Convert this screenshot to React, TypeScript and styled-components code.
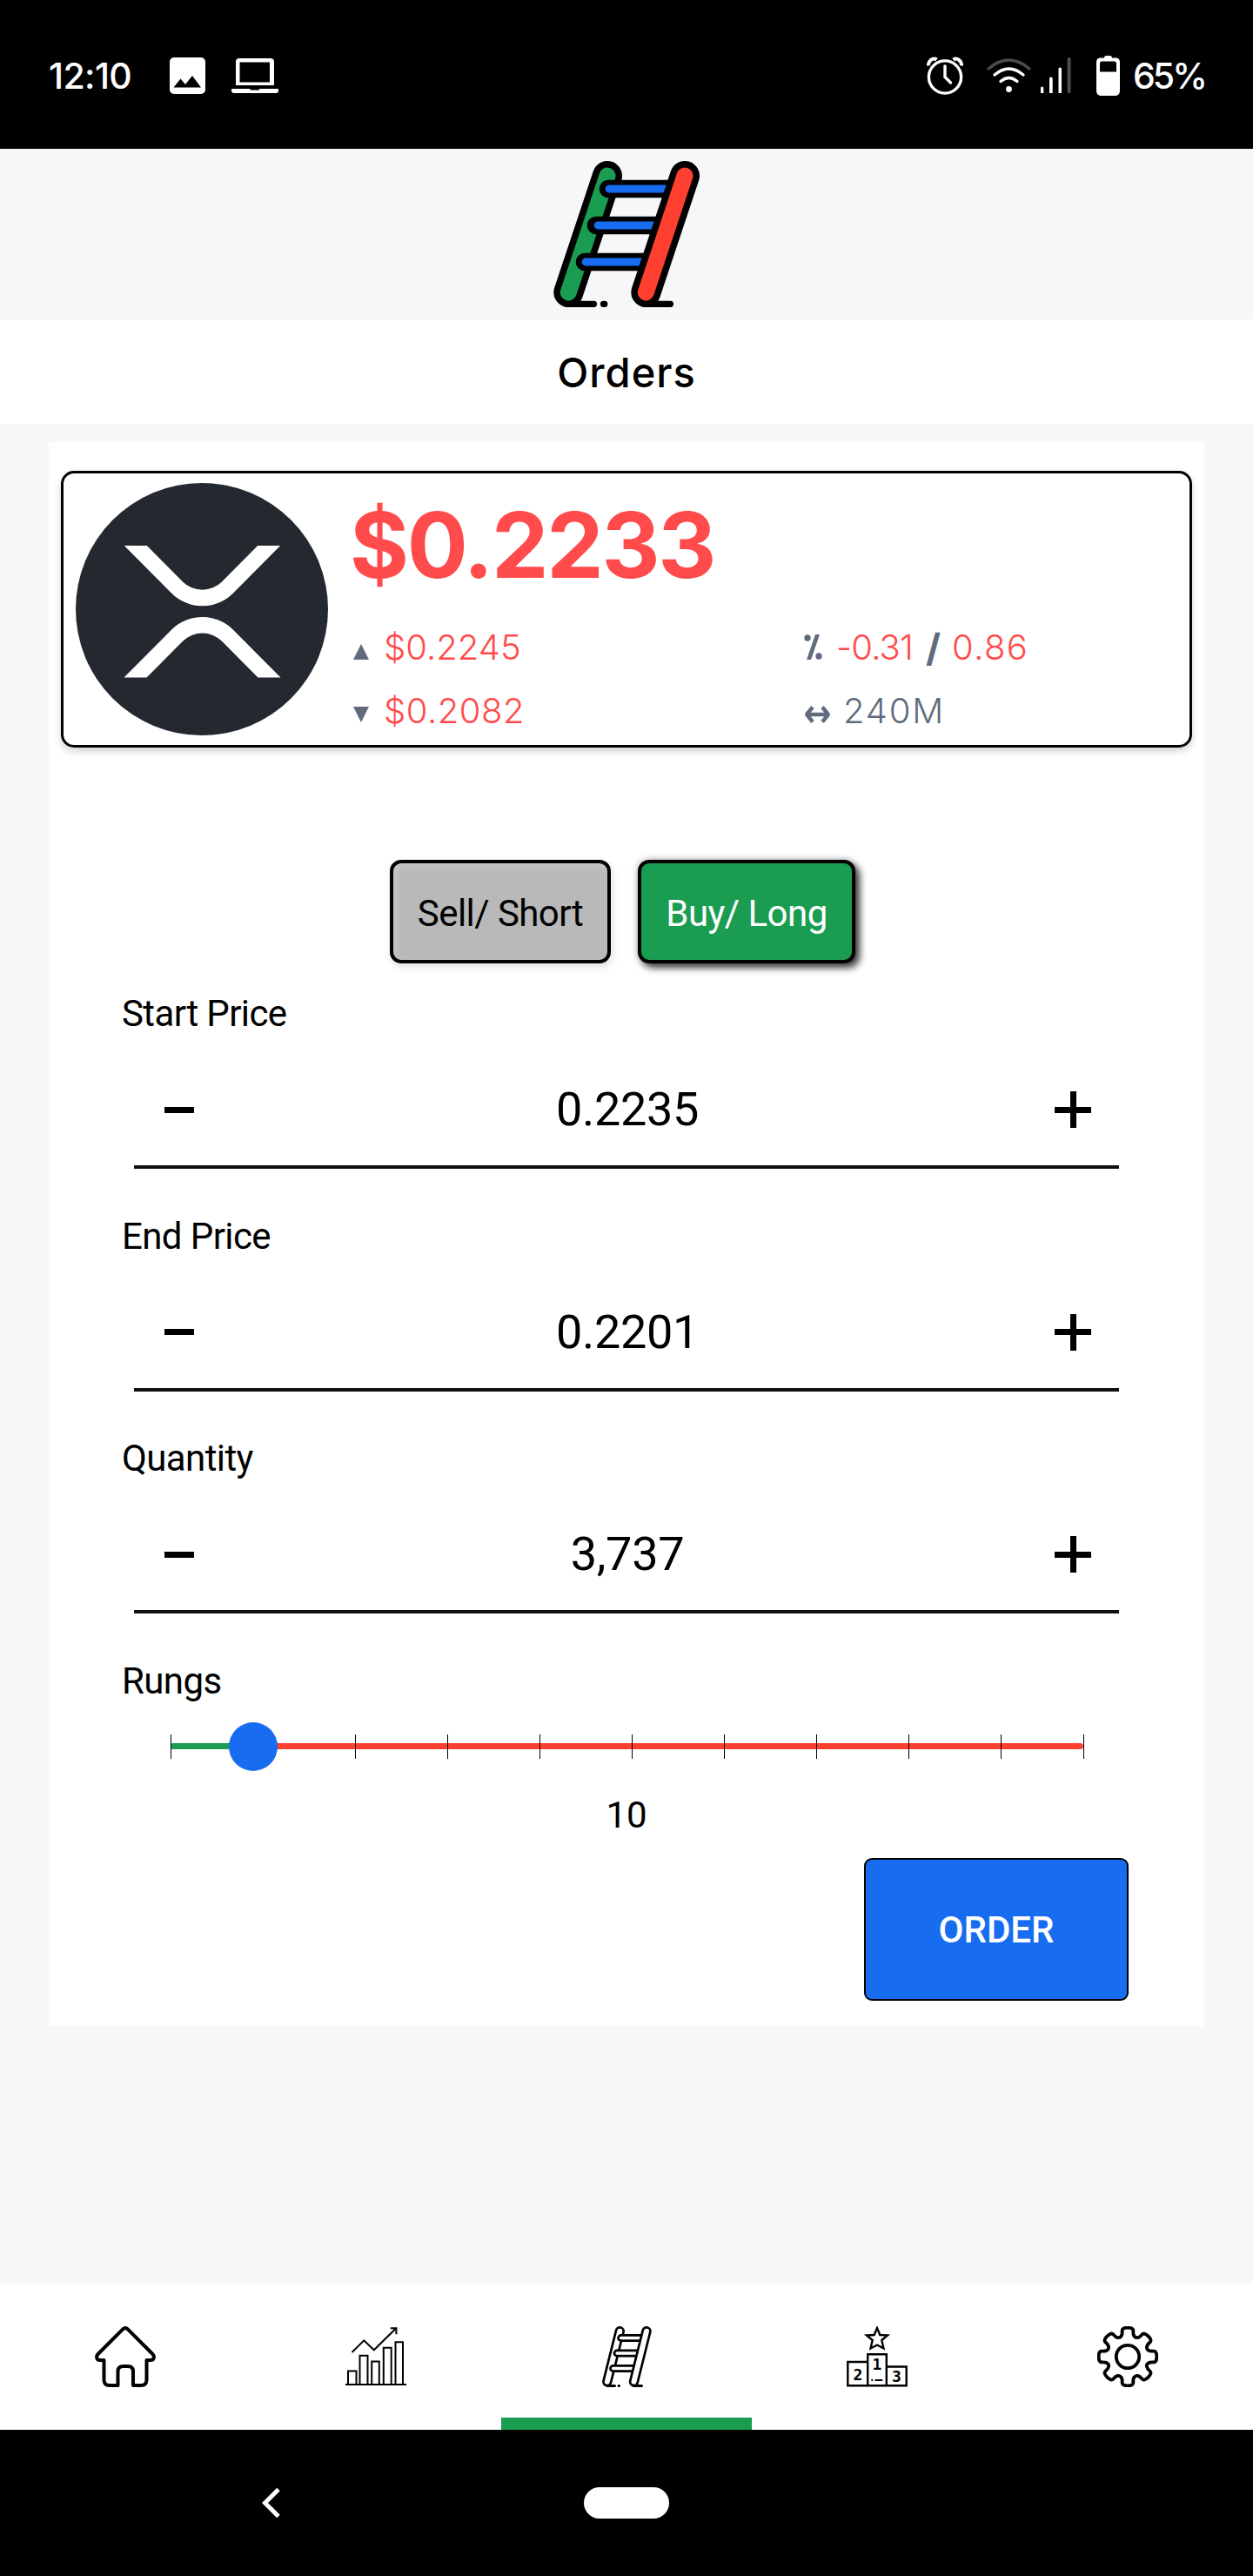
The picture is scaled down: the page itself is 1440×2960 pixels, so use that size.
import React from "react";
import styled, { createGlobalStyle, css } from "styled-components";

const color = {
  green: "#1a9c51",
  red: "#ff3f30",
  price: "#ff4b4b",
  blue: "#176cf0",
  slate: "#606b7d",
  page: "#f5f7f9",
};

const GlobalStyle = createGlobalStyle`
  * { box-sizing: border-box; }
  body { margin: 0; background: ${color.page}; }
`;

const Screen = styled.div`
  width: 1440px;
  height: 2960px;
  display: flex;
  flex-direction: column;
  background: ${color.page};
  color: #000;
  font-family: Roboto, "Liberation Sans", sans-serif;
  font-size: 42px;
  line-height: 50px;
  overflow: hidden;
`;

/* ---------- system status bar ---------- */

const StatusBar = styled.header`
  flex: none;
  height: 171px;
  padding: 2px 56px 0 56px;
  display: flex;
  align-items: center;
  justify-content: space-between;
  background: #000;
  color: #fff;
  font-family: Inter, "Liberation Sans", sans-serif;
  font-weight: 500;
`;

const StatusGroup = styled.div`
  display: flex;
  align-items: center;
`;

const StatusText = styled.span<{ $width: number; $spacing: number }>`
  width: ${(p) => p.$width}px;
  font-size: 41px;
  white-space: nowrap;
  letter-spacing: ${(p) => p.$spacing}px;
`;

const Glyph = styled.svg<{ $gap?: number }>`
  display: block;
  flex: none;
  margin-left: ${(p) => p.$gap ?? 0}px;
`;

/* ---------- app header ---------- */

const LogoBar = styled.div`
  flex: none;
  height: 196px;
  display: flex;
  justify-content: center;
  align-items: center;
  padding-bottom: 8px;
  padding-top: 8px;
`;

const TitleBar = styled.h1`
  flex: none;
  height: 120px;
  margin: 0;
  display: flex;
  align-items: center;
  justify-content: center;
  background: #fff;
  font: 500 47px/120px Inter, "Liberation Sans", sans-serif;
  letter-spacing: 1px;
  padding-top: 2px;
`;

/* ---------- order card ---------- */

const Body = styled.main`
  flex: 1;
  padding: 21px 56px 0;
`;

const Card = styled.section`
  height: 1820px;
  padding: 33px 14px 0;
  background: #fff;
`;

const Ticker = styled.div`
  height: 318px;
  padding: 11px 14px;
  display: flex;
  gap: 29px;
  border: 3px solid #000;
  border-radius: 15px;
  box-shadow: 0 4px 9px rgba(0, 0, 0, 0.18);
`;

const TickerInfo = styled.div`
  flex: 1;
  font-family: Inter, "Liberation Sans", sans-serif;
`;

const Price = styled.div`
  height: 152px;
  margin-left: -4px;
  font-size: 104px;
  font-weight: 700;
  line-height: 142px;
  letter-spacing: -2.3px;
  color: ${color.price};
`;

const Stats = styled.div`
  display: grid;
  grid-template-columns: 518px 1fr;
  grid-auto-rows: 73px;
`;

const Stat = styled.div`
  display: flex;
  align-items: center;
  font-size: 40px;
  font-weight: 300;
  color: ${color.slate};
`;

const Figure = styled.span<{ $down?: boolean; $gap?: number; $spacing?: number }>`
  margin-left: ${(p) => p.$gap ?? 0}px;
  color: ${(p) => (p.$down ? color.price : color.slate)};
  letter-spacing: ${(p) => p.$spacing ?? 0}px;
`;

const Slash = styled.b`
  margin: 0 13px 0 15px;
  font-size: 44px;
  font-weight: 700;
`;

const Sides = styled.div`
  margin: 129px 0 32px;
  padding-left: 378px;
  display: flex;
  gap: 31px;
`;

const SideButton = styled.button<{ $active?: boolean }>`
  width: ${(p) => (p.$active ? 250 : 254)}px;
  height: 119px;
  padding: 4px 0 0;
  border: 4px solid #000;
  border-radius: 13px;
  font: inherit;
  letter-spacing: -0.55px;
  ${(p) =>
    p.$active
      ? css`
          background: ${color.green};
          color: #fff;
          box-shadow: 5px 5px 8px rgba(0, 0, 0, 0.75), 0 0 8px rgba(0, 0, 0, 0.3);
        `
      : css`
          background: #b9b9b9;
          color: #000;
          box-shadow: 2px 4px 10px rgba(0, 0, 0, 0.12), inset 3px 3px 10px rgba(255, 255, 255, 0.2);
        `}
`;

const Form = styled.div`
  padding: 0 70px;
`;

const Field = styled.div`
  height: 255.6px;
`;

const Label = styled.div`
  height: 50px;
  line-height: 52px;
  letter-spacing: -0.6px;
`;

const Stepper = styled.div`
  height: 154px;
  margin: 0 14px;
  padding: 22px 32px 0 35px;
  display: flex;
  align-items: center;
  justify-content: space-between;
  border-bottom: 4px solid #101010;
`;

const StepValue = styled.span`
  font-size: 54px;
  line-height: 64px;
  letter-spacing: -0.3px;
  margin-left: 7px;
`;

const StepGlyph = styled.button<{ $plus?: boolean }>`
  width: ${(p) => (p.$plus ? 42 : 34)}px;
  height: 42px;
  padding: 0;
  border: 0;
  background: ${(p) =>
    p.$plus
      ? "linear-gradient(#000, #000) center / 42px 7px no-repeat, linear-gradient(#000, #000) center / 7px 42px no-repeat"
      : "linear-gradient(#000, #000) center / 34px 7px no-repeat"};
`;

const Slider = styled.div`
  position: relative;
  height: 56px;
  margin: 23px 55px 0 56px;
  display: flex;
  align-items: center;
`;

const Track = styled.div`
  flex: 1;
  height: 7px;
  border-radius: 4px;
  background: ${color.red};
  overflow: hidden;
`;

const TrackFill = styled.div`
  height: 7px;
  background: ${color.green};
`;

const Tick = styled.i`
  position: absolute;
  top: 14px;
  width: 1px;
  height: 28px;
  background: #000;
`;

const Thumb = styled.div`
  position: absolute;
  top: 0;
  width: 56px;
  height: 56px;
  margin-left: -28px;
  border-radius: 50%;
  background: ${color.blue};
`;

const RungCount = styled.div`
  height: 50px;
  margin: 25px 0;
  line-height: 52px;
  text-align: center;
`;

const OrderRow = styled.div`
  display: flex;
  justify-content: flex-end;
  margin-right: 3px;
`;

const OrderButton = styled.button`
  width: 304px;
  height: 164px;
  border: 2px solid #000;
  border-radius: 9px;
  background: ${color.blue};
  color: #fff;
  font: inherit;
  font-weight: 500;
  padding: 3px 0 0;
`;

/* ---------- bottom bars ---------- */

const TabBar = styled.nav`
  flex: none;
  height: 168px;
  display: grid;
  grid-template-columns: repeat(5, 1fr);
  background: #fff;
`;

const Tab = styled.a<{ $active?: boolean }>`
  display: flex;
  align-items: center;
  justify-content: center;
  box-shadow: ${(p) => (p.$active ? `inset 0 -14px ${color.green}` : "none")};
`;

const SystemNav = styled.footer`
  flex: none;
  height: 168px;
  padding-left: 301px;
  display: flex;
  align-items: center;
  background: #000;
`;

const HomePill = styled.div`
  width: 98px;
  height: 36px;
  margin-left: 349px;
  border-radius: 18px;
  background: #fff;
`;

/* ---------- drawings ---------- */

const Logo = () => (
  <svg width="168" height="168" viewBox="0 0 168 168" fill="none" strokeLinecap="round">
    <path d="M17 164.3H46.5M57.4 164.3H58.8M106 164.3H134.5" stroke="#000" strokeWidth="7.2" />
    <path d="M62 17L17.3 151" stroke="#000" strokeWidth="34" />
    <path d="M62 17L17.3 151" stroke={color.green} strokeWidth="19" />
    <path d="M63 32H140M49 74H125M36 116H110" stroke="#000" strokeWidth="20.6" />
    <path d="M64 32H140M51 74H125M37 116H110" stroke={color.blue} strokeWidth="8.8" />
    <path d="M151 17L106.3 151" stroke="#000" strokeWidth="34" />
    <path d="M151 17L106.3 151" stroke={color.red} strokeWidth="19" />
  </svg>
);

const XrpCoin = () => (
  <Glyph width="290" height="290" viewBox="0 0 290 290">
    <circle cx="145" cy="145" r="145" fill="#23292f" />
    <g fill="#fff" transform="translate(55.5 72) scale(.3516 .3575)">
      <path d="M437 0h74L357 152.48c-55.77 55.19-146.19 55.19-202 0L.94 0H75l117 115.83a91.11 91.11 0 0 0 127.91 0z" />
      <path d="M74.05 424H0l155-153.42c55.77-55.19 146.19-55.19 202 0L512 424h-74L320 307.23a91.11 91.11 0 0 0-127.91 0z" />
    </g>
  </Glyph>
);

const Triangle = ({ down }: { down?: boolean }) => (
  <svg width="18" height="18" viewBox="0 0 18 18" fill={color.slate} transform={down ? "translate(0 4)" : "translate(0 5)"}>
    <path d={down ? "M0 0H18L9 18z" : "M0 18H18L9 0z"} />
  </svg>
);

const HomeIcon = () => (
  <svg width="70" height="70" viewBox="0 0 70 70" fill="none" stroke="#000" strokeWidth="4" strokeLinejoin="round">
    <path d="M35 2c-1.2 0-2 .5-2.8 1.3L3.6 32C.9 34.800 2.100 39 6 39H10.500V61.500Q10.500 68 17 68H26.500V52Q26.500 46 32.500 46H38Q44 46 44 52V68H53Q59.500 68 59.500 61.500V39H64C67.900 39 69.100 34.800 66.400 32L37.800 3.300C37 2.500 36.200 2 35 2z" />
  </svg>
);

const ChartIcon = () => (
  <svg width="70" height="70" viewBox="0 0 70 70" fill="none" stroke="#000" strokeWidth="2">
    <path d="M0 67H70" />
    <path d="M3 67V51.500H12.500V67M16.500 67V33.700H25.500V67M30.200 67V40.500H38.800V67M43.800 67V24.700H52.700V67M57.500 67V18.300H66V67" />
    <path d="M7.500 30L21.300 16.300L32.800 27.300L58 2.500M51.800 2.300H58.400V9.300" />
  </svg>
);

const LadderIcon = () => (
  <svg width="57" height="70" viewBox="0 0 57 70" fill="none" strokeLinecap="round">
    <path d="M6 68.500H14.500M19 68.500H19.500M36 68.500H45.500" stroke="#000" strokeWidth="3" />
    <path d="M20.300 5.700L5.800 63.700" stroke="#000" strokeWidth="11.400" />
    <path d="M20.300 5.700L5.800 63.700" stroke="#fff" strokeWidth="6" />
    <path d="M21.500 13.500H47M17 31H43M12.500 48.500H38" stroke="#000" strokeWidth="8.800" />
    <path d="M21.500 13.500H47M17 31H43M12.500 48.500H38" stroke="#fff" strokeWidth="3.400" />
    <path d="M51 5.700L36.500 63.700" stroke="#000" strokeWidth="11.400" />
    <path d="M51 5.700L36.500 63.700" stroke="#fff" strokeWidth="6" />
  </svg>
);

const PodiumIcon = () => (
  <svg width="70" height="70" viewBox="0 0 70 70" fill="none" stroke="#000" strokeWidth="2.400">
    <path d="M35 2l3.300 8 8.700.5-6.700 5.500 2.200 9.500L35 21.500l-7.500 4 2.200-9.500L23 10.500l8.700-.5z" />
    <path d="M24.200 68.300H1.300V41H24.200M24.200 68.300V32.300H45.800V68.300zM45.800 46.500H68.700V68.300H45.800" />
    <path d="M28.300 62H30.200M32.600 62H41.300" strokeWidth="2.200" />
    <g
      fill="#000"
      stroke="none"
      fontFamily="DejaVu Sans Mono, monospace"
      fontWeight="700"
      fontSize="18"
      textAnchor="middle"
    >
      <text x="13" y="61.500">2</text>
      <text x="34.800" y="50">1</text>
      <text x="57.300" y="64">3</text>
    </g>
  </svg>
);

const gearOutline = (() => {
  const pts: [number, number][] = [];
  for (let i = 0; i < 8; i++) {
    const profile = [
      [-22.5, 23.2],
      [-13, 26.5],
      [-11.5, 34],
      [11.5, 34],
      [13, 26.5],
    ];
    for (const [a, r] of profile) {
      const t = ((a + i * 45 - 90) * Math.PI) / 180;
      pts.push([35 + r * Math.cos(t), 35 + r * Math.sin(t)]);
    }
  }
  const mid = (a: [number, number], b: [number, number]) =>
    `${((a[0] + b[0]) / 2).toFixed(2)} ${((a[1] + b[1]) / 2).toFixed(2)}`;
  let d = `M${mid(pts[pts.length - 1], pts[0])}`;
  pts.forEach((p, i) => {
    d += `Q${p[0].toFixed(2)} ${p[1].toFixed(2)} ${mid(p, pts[(i + 1) % pts.length])}`;
  });
  return d + "z";
})();

const GearIcon = () => (
  <svg width="70" height="70" viewBox="0 0 70 70" fill="none" stroke="#000" strokeWidth="3.800">
    <path d={gearOutline} />
    <circle cx="35" cy="35" r="13.200" />
  </svg>
);

/* ---------- screen ---------- */

const fields = [
  { label: "Start Price", value: "0.2235" },
  { label: "End Price", value: "0.2201" },
  { label: "Quantity", value: "3,737" },
];

const MIN = 1;
const MAX = 100;
const rungs = 10;
const percent = (v: number) => `${((v - MIN) / (MAX - MIN)) * 100}%`;
const ticks = [1, 11, 21, 31, 41, 51, 61, 71, 81, 91, 100];

const tabs = [
  { name: "home", icon: <HomeIcon /> },
  { name: "markets", icon: <ChartIcon /> },
  { name: "orders", icon: <LadderIcon /> },
  { name: "ranking", icon: <PodiumIcon /> },
  { name: "settings", icon: <GearIcon /> },
];

export default function App() {
  return (
    <Screen>
      <GlobalStyle />
      <StatusBar>
        <StatusGroup>
          <StatusText $width={96} $spacing={-0.6}>12:10</StatusText>
          <Glyph $gap={43} width="41" height="42" viewBox="0 0 41 42">
            <path
              fill="#fff"
              fillRule="evenodd"
              d="M5 0H36a5 5 0 0 1 5 5V37a5 5 0 0 1-5 5H5a5 5 0 0 1-5-5V5a5 5 0 0 1 5-5zM4.500 34.500H36L26 21L18 31L12.500 24.500z"
            />
          </Glyph>
          <Glyph $gap={30} width="54" height="40" viewBox="0 0 54 40" fill="#fff">
            <path
              fillRule="evenodd"
              d="M9 0H45a4 4 0 0 1 4 4V31H5V4a4 4 0 0 1 4-4zM9.500 4.500V27.500H44V4.500z"
            />
            <path d="M0 35H21.500V36.500H32V35H54V37a3 3 0 0 1-3 3H3a3 3 0 0 1-3-3z" />
          </Glyph>
        </StatusGroup>
        <StatusGroup>
          <Glyph width="42" height="44" viewBox="0 0 42 44" fill="none" stroke="#fff" strokeWidth="3.400">
            <circle cx="21" cy="23.500" r="18.600" />
            <path d="M21 11V23.500L27.500 30" strokeLinecap="round" />
            <path d="M2 10.500C1.500 5 7 .500 11.500 3.500M40 10.500C40.500 5 35 .500 30.500 3.500" strokeWidth="4" />
          </Glyph>
          <Glyph $gap={27} width="51" height="40" viewBox="0 0 51 40" fill="none" stroke="#fff" strokeWidth="3.400" strokeLinecap="round">
            <path d="M2 12Q25.500-8 49 12" stroke="#4d4d4d" />
            <path d="M9 19Q25.500 5 42 19M16 26.500Q25.500 18.500 35 26.500" />
            <circle cx="25.500" cy="35.500" r="3.400" fill="#fff" stroke="none" />
          </Glyph>
          <Glyph $gap={11} width="36" height="41" viewBox="0 0 36 41" fill="#fff">
            <path d="M0 35q0-1.500 1.500-1.500T3.300 35V41H0zM10 24q0-1.500 1.700-1.500T13.700 24V41H10zM20.500 13q0-1.500 1.700-1.500T24 13V41H20.500z" />
            <rect x="30.600" y="0" width="4" height="41" rx="1.500" fill="#4d4d4d" />
          </Glyph>
          <Glyph $gap={28} width="27" height="46" viewBox="0 0 27 46" fill="#fff">
            <path
              fillRule="evenodd"
              d="M11 0H16Q18 0 18 2.500H22Q27 2.500 27 7.500V40Q27 46 21 46H6Q0 46 0 40V7.500Q0 2.500 5 2.500H9Q9 0 11 0zM4 9V18.500H23V9Q23 6.500 21 6.500H6Q4 6.500 4 9z"
            />
          </Glyph>
          <Glyph $gap={0} width="15" height="1" />
          <StatusText $width={82} $spacing={-3}>65%</StatusText>
        </StatusGroup>
      </StatusBar>

      <LogoBar>
        <Logo />
      </LogoBar>
      <TitleBar>Orders</TitleBar>

      <Body>
        <Card>
          <Ticker>
            <XrpCoin />
            <TickerInfo>
              <Price>$0.2233</Price>
              <Stats>
                <Stat>
                  <Triangle />
                  <Figure $down $gap={17}>$0.2245</Figure>
                </Stat>
                <Stat>
                  <svg width="21" height="29" viewBox="0 0 21 29" fill={color.slate}>
                    <path d="M13 0H18L8 29H3z" />
                    <circle cx="4" cy="4" r="3.700" />
                    <circle cx="17" cy="25" r="3.700" />
                  </svg>
                  <Figure $down $gap={16} $spacing={-0.8}>-0.31</Figure>
                  <Slash>/</Slash>
                  <Figure $down $spacing={1.4}>0.86</Figure>
                </Stat>
                <Stat>
                  <Triangle down />
                  <Figure $down $gap={17} $spacing={0.5}>$0.2082</Figure>
                </Stat>
                <Stat>
                  <svg width="31" height="28" viewBox="0 0 31 28" fill="none" stroke={color.slate} strokeWidth="4.400">
                    <path d="M3 18H28M10 9.500L3 18L10 26.500M21 9.500L28 18L21 26.500" strokeLinejoin="bevel" />
                  </svg>
                  <Figure $gap={14} $spacing={1.8}>240M</Figure>
                </Stat>
              </Stats>
            </TickerInfo>
          </Ticker>

          <Sides>
            <SideButton>Sell/ Short</SideButton>
            <SideButton $active>Buy/ Long</SideButton>
          </Sides>

          <Form>
            {fields.map((f) => (
              <Field key={f.label}>
                <Label>{f.label}</Label>
                <Stepper>
                  <StepGlyph aria-label="decrease" />
                  <StepValue>{f.value}</StepValue>
                  <StepGlyph $plus aria-label="increase" />
                </Stepper>
              </Field>
            ))}
            <Label>Rungs</Label>
            <Slider>
              <Track>
                <TrackFill style={{ width: percent(rungs) }} />
              </Track>
              {ticks.map((t) => (
                <Tick key={t} style={{ left: percent(t) }} />
              ))}
              <Thumb style={{ left: percent(rungs) }} />
            </Slider>
            <RungCount>{rungs}</RungCount>
            <OrderRow>
              <OrderButton>ORDER</OrderButton>
            </OrderRow>
          </Form>
        </Card>
      </Body>

      <TabBar>
        {tabs.map((t) => (
          <Tab key={t.name} $active={t.name === "orders"}>
            {t.icon}
          </Tab>
        ))}
      </TabBar>
      <SystemNav>
        <svg width="21" height="36" viewBox="0 0 21 36" fill="none" stroke="#fff" strokeWidth="5">
          <path d="M19 2.500L3.500 18L19 33.500" />
        </svg>
        <HomePill />
      </SystemNav>
    </Screen>
  );
}
